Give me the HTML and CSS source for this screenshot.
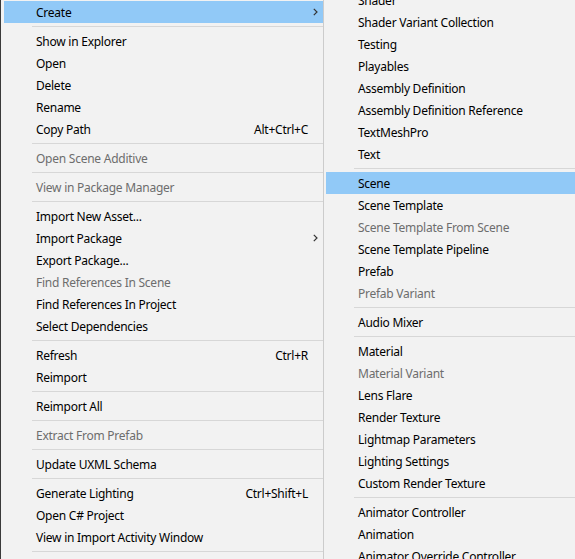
FILE: index.html
```html
<!DOCTYPE html>
<html>
<head>
<meta charset="utf-8">
<link rel="stylesheet" href="styles.css">
</head>
<body>
<div class="screen">
  <div class="edge"></div>
  <div class="menu menu-main">
    <div class="item active"><span class="label">Create</span><span class="arrow"><svg width="5" height="8" viewBox="0 0 5 8"><polyline points="0.8,0.8 4,4 0.8,7.2" fill="none" stroke="#333" stroke-width="1.2"/></svg></span></div>
    <div class="sep"></div>
    <div class="item"><span class="label">Show in Explorer</span></div>
    <div class="item"><span class="label">Open</span></div>
    <div class="item"><span class="label">Delete</span></div>
    <div class="item"><span class="label">Rename</span></div>
    <div class="item"><span class="label">Copy Path</span><span class="shortcut">Alt+Ctrl+C</span></div>
    <div class="sep"></div>
    <div class="item disabled"><span class="label">Open Scene Additive</span></div>
    <div class="sep"></div>
    <div class="item disabled"><span class="label">View in Package Manager</span></div>
    <div class="sep"></div>
    <div class="item"><span class="label">Import New Asset...</span></div>
    <div class="item"><span class="label">Import Package</span><span class="arrow"><svg width="5" height="8" viewBox="0 0 5 8"><polyline points="0.8,0.8 4,4 0.8,7.2" fill="none" stroke="#333" stroke-width="1.2"/></svg></span></div>
    <div class="item"><span class="label">Export Package...</span></div>
    <div class="item disabled"><span class="label">Find References In Scene</span></div>
    <div class="item"><span class="label">Find References In Project</span></div>
    <div class="item"><span class="label">Select Dependencies</span></div>
    <div class="sep"></div>
    <div class="item"><span class="label">Refresh</span><span class="shortcut">Ctrl+R</span></div>
    <div class="item"><span class="label">Reimport</span></div>
    <div class="sep"></div>
    <div class="item"><span class="label">Reimport All</span></div>
    <div class="sep"></div>
    <div class="item disabled"><span class="label">Extract From Prefab</span></div>
    <div class="sep"></div>
    <div class="item"><span class="label">Update UXML Schema</span></div>
    <div class="sep"></div>
    <div class="item"><span class="label">Generate Lighting</span><span class="shortcut">Ctrl+Shift+L</span></div>
    <div class="item"><span class="label">Open C# Project</span></div>
    <div class="item"><span class="label">View in Import Activity Window</span></div>
    <div class="sep"></div>
  </div>
  <div class="menu menu-sub">
    <div class="item"><span class="label">Shader</span><span class="arrow"><svg width="5" height="8" viewBox="0 0 5 8"><polyline points="0.8,0.8 4,4 0.8,7.2" fill="none" stroke="#333" stroke-width="1.2"/></svg></span></div>
    <div class="item"><span class="label">Shader Variant Collection</span></div>
    <div class="item"><span class="label">Testing</span><span class="arrow"><svg width="5" height="8" viewBox="0 0 5 8"><polyline points="0.8,0.8 4,4 0.8,7.2" fill="none" stroke="#333" stroke-width="1.2"/></svg></span></div>
    <div class="item"><span class="label">Playables</span><span class="arrow"><svg width="5" height="8" viewBox="0 0 5 8"><polyline points="0.8,0.8 4,4 0.8,7.2" fill="none" stroke="#333" stroke-width="1.2"/></svg></span></div>
    <div class="item"><span class="label">Assembly Definition</span></div>
    <div class="item"><span class="label">Assembly Definition Reference</span></div>
    <div class="item"><span class="label">TextMeshPro</span><span class="arrow"><svg width="5" height="8" viewBox="0 0 5 8"><polyline points="0.8,0.8 4,4 0.8,7.2" fill="none" stroke="#333" stroke-width="1.2"/></svg></span></div>
    <div class="item"><span class="label">Text</span><span class="arrow"><svg width="5" height="8" viewBox="0 0 5 8"><polyline points="0.8,0.8 4,4 0.8,7.2" fill="none" stroke="#333" stroke-width="1.2"/></svg></span></div>
    <div class="sep"></div>
    <div class="item active"><span class="label">Scene</span></div>
    <div class="item"><span class="label">Scene Template</span></div>
    <div class="item disabled"><span class="label">Scene Template From Scene</span></div>
    <div class="item"><span class="label">Scene Template Pipeline</span></div>
    <div class="item"><span class="label">Prefab</span></div>
    <div class="item disabled"><span class="label">Prefab Variant</span></div>
    <div class="sep"></div>
    <div class="item"><span class="label">Audio Mixer</span></div>
    <div class="sep"></div>
    <div class="item"><span class="label">Material</span></div>
    <div class="item disabled"><span class="label">Material Variant</span></div>
    <div class="item"><span class="label">Lens Flare</span></div>
    <div class="item"><span class="label">Render Texture</span></div>
    <div class="item"><span class="label">Lightmap Parameters</span></div>
    <div class="item"><span class="label">Lighting Settings</span></div>
    <div class="item"><span class="label">Custom Render Texture</span></div>
    <div class="sep"></div>
    <div class="item"><span class="label">Animator Controller</span></div>
    <div class="item"><span class="label">Animation</span></div>
    <div class="item"><span class="label">Animator Override Controller</span></div>
  </div>
</div>
</body>
</html>
```
FILE: styles.css
```css
html, body {
  margin: 0;
  padding: 0;
  width: 575px;
  height: 559px;
  overflow: hidden;
  background: #f2f2f2;
}
.screen {
  display: flex;
  align-items: flex-start;
  width: 575px;
  height: 559px;
  overflow: hidden;
  font-family: "Noto Sans", "Noto Sans CJK KR", sans-serif;
  font-size: 12px;
  letter-spacing: -0.25px;
  color: #000;
}
.edge {
  flex: 0 0 1px;
  height: 559px;
  background: #3a3a3a;
}
.menu {
  background: #f2f2f2;
  display: flex;
  flex-direction: column;
}
.menu-main {
  flex: 0 0 319px;
  padding: 1px 0 0 3px;
  border-right: 1px solid #cccccc;
  height: 600px;
}
.menu-sub {
  flex: 0 0 260px;
  margin-top: -11px;
  padding-left: 2px;
}
.item {
  display: flex;
  align-items: center;
  height: 22px;
  padding-left: 32px;
  white-space: nowrap;
}
.menu-main .item {
  padding-right: 5px;
}
.menu-sub .item {
  padding-right: 13px;
  width: 235px;
}
.item.active {
  background: #91c9f7;
}
.item.disabled {
  color: #6d6d6d;
}
.label {
  flex: 1 1 auto;
}
.shortcut {
  margin-right: 10px;
}
.arrow {
  display: flex;
  align-items: center;
  width: 5px;
}
.sep {
  height: 1px;
  margin: 3px 0 3px 28px;
  background: #d7d7d7;
}
```
